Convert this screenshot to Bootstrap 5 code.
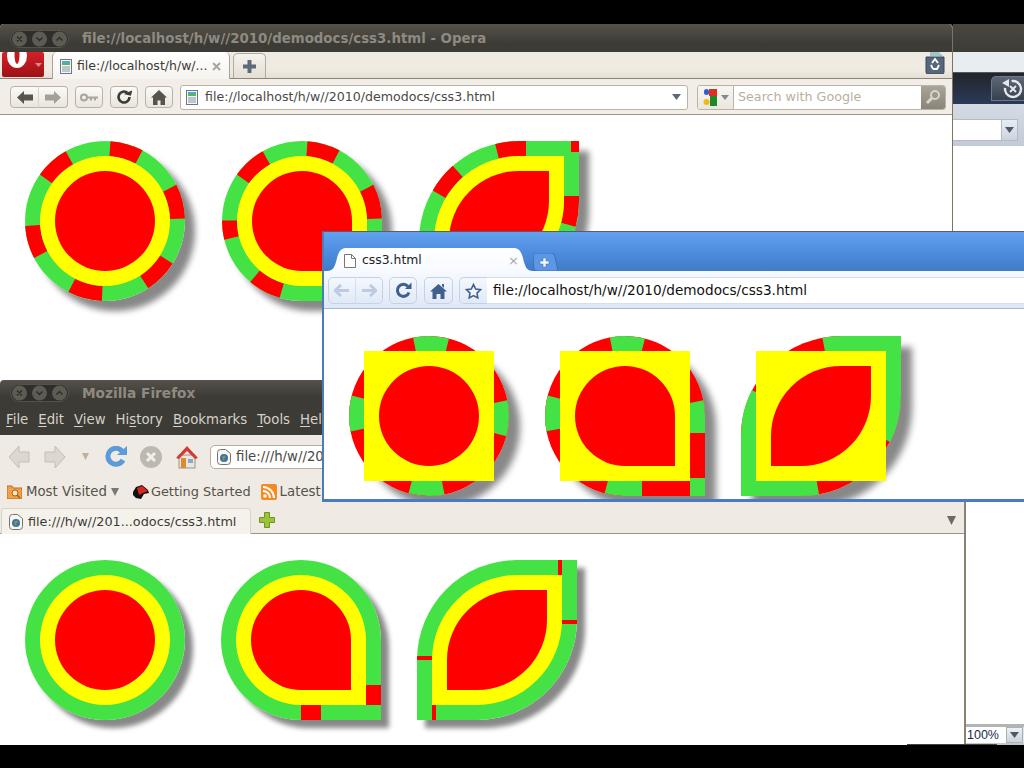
<!DOCTYPE html>
<html lang="en">
<head>
<meta charset="utf-8">
<title>css3 demo desktop</title>
<link href="https://cdn.jsdelivr.net/npm/bootstrap@5.3.0/dist/css/bootstrap.min.css" rel="stylesheet">
<style>
html,body{margin:0;background:#000;overflow:hidden}
body{font-family:"DejaVu Sans",sans-serif}
.desk{position:relative;width:1024px;height:768px;overflow:hidden;background:#000}
.win{position:absolute;overflow:hidden;background:#fff;display:flex;flex-direction:column}
.win svg{flex:none}
.w-back{left:953px;top:24px;width:71px;height:721px;z-index:1}
.w-opera{left:0;top:24px;width:953px;height:400px;z-index:2;border-right:1px solid #7c7464;border-radius:4px 4px 0 0}
.w-fox{left:0;top:380px;width:966px;height:365px;z-index:3;border-right:2px solid #8a8272;border-radius:4px 4px 0 0}
.w-chr{left:322px;top:231px;width:720px;height:271px;z-index:4;border:2px solid #4a7cbd;border-top:1px solid #55606e;border-right:0;border-bottom-width:3px}
.titlebar{height:28px;flex:none;background:linear-gradient(#56524a,#3c3b36 70%);padding:2px 0 0 10px;gap:13px;color:#8f8a80;font-weight:700;font-size:13.35px;white-space:nowrap}
.fox-title{height:24px;padding-top:2px;font-size:13.7px}
.pill{display:block;width:59px;height:18px;flex:none}
.op-tabs{height:27px;flex:none;border-bottom:1px solid #8d8678;background:linear-gradient(#efebe3 70%,#e3dfd6)}
.op-menu{width:42px;height:25px;margin:0 8px 0 2px;flex:none;align-self:flex-start}
.op-tab{width:178px;height:27px;flex:none;align-self:flex-start;background:linear-gradient(#fff,#f6f4ef);border:1px solid #a9a395;border-bottom:0;border-top:0;border-top-right-radius:5px;border-top-left-radius:5px;font-size:12.5px;color:#3c3b37;padding:2px 0 0 7px;gap:5px;margin-right:3px;white-space:nowrap}
.op-new{width:33px;height:25px;flex:none;align-self:flex-end;background:linear-gradient(#f6f3ed,#e4dfd5);border:1px solid #b1ab9e;border-bottom:0;border-radius:5px 5px 0 0}
.op-trash{margin-left:auto;margin-right:7px;flex:none}
.op-bar{height:36px;flex:none;border-bottom:1px solid #9c9689;background:#f2eee7;padding:1px 0 0 10px;color:#3c3b37}
.tb{height:22px;padding:0;display:flex;align-items:center;justify-content:center;border:1px solid #b9b3a7;border-radius:4px;background:linear-gradient(#fbfaf7,#e9e5dc);flex:none}
.tb:disabled{opacity:1}
.tb-h{width:28px}
.tb-g{width:29px;border-radius:4px 0 0 4px}
.tb-g2{width:30px;border-radius:0 4px 4px 0;border-left:1px solid #d8d3c9;margin-left:-1px}
.gp7{margin-right:7px}
.urlbox{height:25px;background:#fff;border:1px solid #b9b3a7;border-radius:3px;font-size:12.6px;color:#4a4945;white-space:nowrap;overflow:hidden}
.op-url{width:508px;margin:0 9px 0 0;padding:0 6px 0 5px;gap:7px}
.op-search{width:249px;color:#b9af9d;font-size:12.7px}
.g-box{width:36px;height:100%;border-right:1px solid #b9b3a7;background:linear-gradient(#f8f6f1,#ebe7de);padding-left:4px;gap:3px;flex:none}
.op-go{width:24px;height:100%;background:linear-gradient(#aaa498,#8a8578);flex:none;margin-left:auto}
.sheet{flex:1;background:#fff}
.op-sheet{padding:26px 0 0 25px;gap:37px}
.fox-sheet{padding:26px 0 0 25px;gap:36px}
.chr-sheet{padding:27px 0 0 25px;gap:36px}
.shp{width:160px;height:160px;flex:none;position:relative}
.shp svg{display:block;overflow:visible;width:160px;height:160px}
.sh-o{box-shadow:10px 10px 6px #888}
.sh-f{box-shadow:8px 8px 5px #888}
.sh-c{box-shadow:11px 11px 7px #888}
.r-c{border-radius:50%}
.r-d{border-radius:80px 80px 0 80px}
.r-l{border-radius:100px 0 100px 0}
.fox-menu{height:31px;flex:none;background:#3c3b36;padding-left:6px;font-size:13.3px;color:#d5d1c8;gap:10px;white-space:nowrap}
.fox-menu u{text-decoration-thickness:1px;text-underline-offset:2px}
.fox-bar{height:43px;flex:none;padding-left:8px;background:#efebe4}
.fwd{margin:0 16px 0 14px}
.tri{margin-right:16px}
.rel{margin-right:13px}
.stp{margin-right:14px}
.fox-url{width:500px;height:24px;margin-left:12px;padding-left:6px;gap:5px;font-size:13.3px;border-radius:5px;flex:none;border-color:#b8ae98}
.fox-marks{height:29px;flex:none;background:#efebe4;padding:0 0 2px 7px;font-size:13.3px;color:#555249;white-space:nowrap}
.gs{font-size:12.9px;margin-left:2px}
.vis{margin-right:14px}
.rss{margin-left:10px}
.lat{margin-left:3px}
.fox-tabs{height:27px;flex:none;background:#efebe4;border-bottom:1px solid #9b9589;padding-left:1px}
.fox-tab{width:250px;height:26px;flex:none;align-self:flex-start;margin-top:1px;background:#f5f2ec;border:1px solid #d9d4c8;border-bottom:0;border-radius:3px 3px 0 0;padding-left:7px;gap:5px;font-size:12.8px;color:#3c3b37;white-space:nowrap}
.chr-top{height:39px;flex:none;background:linear-gradient(#62a0f0,#4b8ada 60%,#3f7cc9);padding-left:3px}
.chr-tab{width:206px;height:23px;flex:none;background:linear-gradient(#fff,#f7faff);clip-path:path('M0,23 C6,23 8,19 10,10 C12,3 14,0 20,0 L186,0 C192,0 194,3 196,10 C198,19 200,23 206,23 Z');padding:2px 0 0 17px;gap:6px;font-size:12.4px;color:#222;white-space:nowrap}
.chr-x{margin-left:auto;margin-right:14px;color:#a9a9a9;font-size:13px}
.chr-bar{height:38px;flex:none;background:linear-gradient(#f7faff,#dfe8f6);border-bottom:1px solid #a6b9d6;padding:2px 0 0 4px}
.cb{height:27px;padding:0;display:flex;align-items:center;justify-content:center;border:1px solid #c5d2e6;border-radius:5px;background:linear-gradient(#f4f8fe,#e0e9f6);flex:none}
.cb:disabled{opacity:1}
.cb-h{width:28px;margin-right:7px}
.cb-h2{width:29px;margin-right:6px}
.cb-g{width:28px;border-radius:5px 0 0 5px}
.cb-g2{width:28px;margin:0 6px 0 -1px;border-radius:0 5px 5px 0;border-left:1px solid #d3ddec}
.omni{height:27px;flex:1;font-size:13.65px;color:#111;white-space:nowrap}
.omni-star{width:28px;height:27px;flex:none;border:1px solid #c5d2e6;border-right:0;border-radius:5px 0 0 5px;background:linear-gradient(#f4f8fe,#e0e9f6)}
.omni-text{background:#fff;flex:1;height:27px;padding-left:6px;border-top:1px solid #d4deee;border-bottom:1px solid #d4deee}
.bk-title{height:28px;flex:none;background:linear-gradient(#4a4740,#3c3b36)}
.bk-light{height:21px;flex:none;background:#e8edf1;border-bottom:1px solid #55595f}
.bk-dark{height:31px;flex:none;background:linear-gradient(#22252a,#2b3a58);padding:3px 0 3px 38px}
.bk-btn{flex:1;height:25px;background:linear-gradient(#5d6875,#36404e);border:1px solid #6f7a87;border-right:0;border-radius:5px 0 0 0;padding-left:8px}
.bk-field{height:42px;flex:none;background:linear-gradient(#d4dbe4,#c2cbd7);padding:15px 6px 5px 0}
.bk-input{height:22px;background:#fff;border:1px solid #b5bcc6;border-left:0}
.bk-arrow{width:16px;margin-left:auto;height:100%;background:linear-gradient(#e9edf2,#cdd4de);border-left:1px solid #b5bcc6}
.bk-foot{height:21px;flex:none;margin-top:auto;border-top:3px solid #b4b4b4;background:#e4e7ea;font-family:"Liberation Sans",sans-serif;font-size:12.5px;color:#16284e;border-bottom:2px solid #c4c8cc}
.bk-num{width:40px;height:100%;background:#fff;padding-left:1px;margin-left:13px;flex:none}
.bk-pad{width:17px;height:100%;border:1px solid #aab1bb;background:linear-gradient(#eef1f4,#ccd3dc);flex:none}
.foot-line{position:absolute;left:907px;top:744px;width:90px;height:1px;background:#444;z-index:5}
</style>
</head>
<body>
<svg class="d-none" xmlns="http://www.w3.org/2000/svg">
  <symbol id="wm" viewBox="0 0 59 18">
    <rect x=".5" y=".5" width="58" height="17" rx="8.5" fill="#2f2e2a" stroke="#55524b"/>
    <circle cx="9.5" cy="9" r="7.5" fill="#5e5b55"/><circle cx="29.5" cy="9" r="7.5" fill="#5e5b55"/><circle cx="49.5" cy="9" r="7.5" fill="#5e5b55"/>
    <path d="M7 6.500l5 5M12 6.500l-5 5M26.500 7.500l3 3 3-3M46.500 10.500l3-3 3 3" fill="none" stroke="#2f2e2a" stroke-width="1.500"/>
  </symbol>
  <symbol id="doc" viewBox="0 0 12 15">
    <rect x=".5" y=".5" width="11" height="14" fill="#f4f6f8" stroke="#6d7884"/>
    <rect x="2" y="2" width="8" height="4" fill="#4fa9d8"/><rect x="2" y="4" width="8" height="2" fill="#5db84a"/>
    <path d="M2 8h8M2 10h8M2 12h8" stroke="#8794a2"/>
  </symbol>
  <symbol id="globe" viewBox="0 0 14 16">
    <path d="M.5 3.500a3 3 0 0 1 3-3h5l5 4v8a3 3 0 0 1-3 3h-7a3 3 0 0 1-3-3z" fill="#f6f6f4" stroke="#77736a"/>
    <circle cx="7" cy="9" r="4" fill="#3f6fa8"/><path d="M5 7.500l3-1 1 2-2 1 1 2-2 0z" fill="#7a9a44"/>
  </symbol>
  <symbol id="gray-arrow" viewBox="0 0 22 24">
    <path d="M1 12L11 1v6h10v10H11v6z" fill="#dcd8d0" stroke="#c2beb5"/>
  </symbol>
</svg>

<main class="desk">

  <section class="win w-back">
    <div class="bk-title"></div>
    <div class="bk-light"></div>
    <div class="bk-dark d-flex">
      <div class="bk-btn d-flex align-items-center">
        <svg width="26" height="24" viewBox="0 0 26 24"><circle cx="13" cy="12" r="8" fill="none" stroke="#e3e6ea" stroke-width="2.400" stroke-dasharray="40 12" transform="rotate(-100 13 12)"/><path d="M2 6l7-4v8z" fill="#e3e6ea"/><path d="M10 9l6 6M16 9l-6 6" stroke="#e3e6ea" stroke-width="2"/></svg>
      </div>
    </div>
    <div class="bk-field">
      <div class="bk-input d-flex"><span class="bk-arrow d-flex align-items-center justify-content-center"><svg width="9" height="6" viewBox="0 0 9 6"><path d="M0 0h9L4.500 6z" fill="#4e5a68"/></svg></span></div>
    </div>
    <div class="bk-foot d-flex align-items-center">
      <span class="bk-num d-flex align-items-center">100%</span>
      <span class="bk-pad d-flex align-items-center justify-content-center"><svg width="9" height="6" viewBox="0 0 9 6"><path d="M0 0h9L4.500 6z" fill="#4e5a68"/></svg></span>
    </div>
  </section>

  <section class="win w-opera">
    <header class="titlebar d-flex align-items-center"><svg class="pill"><use href="#wm"/></svg><span>file://localhost/h/w//2010/demodocs/css3.html - Opera</span></header>
    <div class="op-tabs d-flex align-items-end">
      <svg class="op-menu" viewBox="0 0 42 25"><defs><linearGradient id="rd" x1="0" y1="0" x2="0" y2="1"><stop offset="0" stop-color="#d62027"/><stop offset="1" stop-color="#9c1116"/></linearGradient><clipPath id="rc"><rect width="42" height="25" rx="2"/></clipPath></defs><g clip-path="url(#rc)"><rect width="42" height="25" fill="url(#rd)"/><ellipse cx="15" cy="4" rx="10" ry="12" fill="#fff"/><ellipse cx="15" cy="3" rx="2.500" ry="9" fill="#c8181e"/><path d="M33 11h7l-3.500 4z" fill="#d98a8a"/></g></svg>
      <div class="op-tab d-flex align-items-center">
        <svg width="12" height="15"><use href="#doc"/></svg><span>file://localhost/h/w/...</span><svg class="ms-auto me-2" width="9" height="9" viewBox="0 0 9 9"><path d="M1 1l7 7M8 1l-7 7" stroke="#a9a69f" stroke-width="2"/></svg>
      </div>
      <div class="op-new d-flex align-items-center justify-content-center"><svg width="13" height="13" viewBox="0 0 13 13"><path d="M4.500 0h4v4.500H13v4H8.500V13h-4V8.500H0v-4h4.500z" fill="#5e6a78"/></svg></div>
      <svg class="op-trash mb-1" width="20" height="22" viewBox="0 0 20 22"><path d="M5 0h9l4 4H5z" fill="#9fc5c8"/><path d="M1 5h18v15a2 2 0 0 1-2 2H3a2 2 0 0 1-2-2z" fill="#56677c" stroke="#3a4656"/><path d="M7 11l3-4 3 4M14 13l-2 4h-4M6 13l2 4" fill="none" stroke="#fff" stroke-width="1.800"/></svg>
    </div>
    <div class="op-bar d-flex align-items-center">
      <button class="btn tb tb-g" type="button" aria-label="Back"><svg width="16" height="13" viewBox="0 0 16 13"><path d="M0 6.500L7 0v3.500h9v6H7V13z" fill="#57544d"/></svg></button>
      <button class="btn tb tb-g2 gp7" type="button" aria-label="Forward"><svg width="16" height="13" viewBox="0 0 16 13"><path d="M16 6.500L9 0v3.500H0v6h9V13z" fill="#a3a097"/></svg></button>
      <button class="btn tb tb-h gp7" type="button" aria-label="Key"><svg width="18" height="9" viewBox="0 0 18 9"><circle cx="4" cy="4.500" r="3" fill="none" stroke="#a8a59c" stroke-width="2"/><path d="M7 3.500h11v2h-2v2h-2v-2h-2v2h-2v-2H7z" fill="#a8a59c"/></svg></button>
      <button class="btn tb tb-h gp7" type="button" aria-label="Reload"><svg width="16" height="16" viewBox="0 0 16 16"><path d="M13.500 8a5.500 5.500 0 1 1-2-4.200" fill="none" stroke="#3b3a36" stroke-width="2.600"/><path d="M8 6h7.500V.5z" fill="#3b3a36" transform="rotate(14 12 4)"/></svg></button>
      <button class="btn tb tb-h gp7" type="button" aria-label="Home"><svg width="16" height="15" viewBox="0 0 16 15"><path d="M8 0l8 7.500h-2V15H9.500v-4.500h-3V15H2V7.500H0z" fill="#57544d"/></svg></button>
      <div class="urlbox op-url d-flex align-items-center"><svg width="12" height="15"><use href="#doc"/></svg><span>file://localhost/h/w//2010/demodocs/css3.html</span><svg class="ms-auto" width="9" height="6" viewBox="0 0 9 6"><path d="M0 0h9L4.500 6z" fill="#5e6a78"/></svg></div>
      <div class="urlbox op-search d-flex align-items-center">
        <div class="g-box d-flex align-items-center"><svg width="16" height="17" viewBox="0 0 16 17"><rect x="2" y="0" width="5" height="6" rx="2.500" fill="#2a62d0"/><rect x="7" y="0" width="8" height="7" fill="#dd3024"/><circle cx="4.500" cy="13" r="3" fill="#f3b617"/><path d="M8 7h7v10H8z" fill="#1c8a28"/></svg><svg width="8" height="5" viewBox="0 0 8 5"><path d="M0 0h8L4 5z" fill="#7e8a98"/></svg></div>
        <span class="ms-1">Search with Google</span>
        <div class="op-go d-flex align-items-center justify-content-center"><svg width="16" height="16" viewBox="0 0 16 16"><circle cx="10" cy="6" r="4" fill="none" stroke="#d8d4cb" stroke-width="2"/><path d="M7 9l-5 5" stroke="#d8d4cb" stroke-width="3"/></svg></div>
      </div>
    </div>
    <div class="sheet d-flex op-sheet">
      <div class="shp sh-o r-c"><svg viewBox="0 0 160 160">
        <circle cx="80" cy="80" r="80" fill="#44e244"/>
        <circle cx="80" cy="80" r="72.500" fill="none" stroke="#f00" stroke-width="15" stroke-dasharray="0 5.06 30.37 44.29 31.63 43.02 31.63 44.29 31.63 44.29 30.37 49.35 31.63 37.96" transform="rotate(-90 80 80)"/>
        <circle cx="80" cy="80" r="65" fill="#ff0"/><circle cx="80" cy="80" r="50" fill="#f00"/></svg></div>
      <div class="shp sh-o r-d"><svg viewBox="0 0 160 160">
        <path d="M80 0a80 80 0 0 1 80 80v80H80A80 80 0 0 1 80 0z" fill="#44e244"/>
        <circle cx="80" cy="80" r="72.500" fill="none" stroke="#f00" stroke-width="15" stroke-dasharray="0 5.06 30.37 44.29 31.63 136.66 30.37 45.55 17.72 44.29 31.63 37.96" transform="rotate(-90 80 80)"/>
        <path d="M80 15a65 65 0 0 1 65 65v65H80A65 65 0 0 1 80 15z" fill="#ff0"/>
        <path d="M80 30a50 50 0 0 1 50 50v50H80A50 50 0 0 1 80 30z" fill="#f00"/></svg></div>
      <div class="shp sh-o r-l"><svg viewBox="0 0 160 160">
        <path d="M100 0h60v60A100 100 0 0 1 60 160H0V100A100 100 0 0 1 100 0z" fill="#44e244"/>
        <path d="M20.200 53.200A92.500 92.500 0 0 1 38.700 30.400M78 10.200A92.500 92.500 0 0 1 100 7.500H107M152.500 55V60A92.500 92.500 0 0 1 149.400 83.700" fill="none" stroke="#f00" stroke-width="15"/>
        <path d="M152 0h8v11h-8z" fill="#f00"/>
        <path d="M100 15h45v45A85 85 0 0 1 60 145H15V100A85 85 0 0 1 100 15z" fill="#ff0"/>
        <path d="M100 30h30v30A70 70 0 0 1 60 130H30V100A70 70 0 0 1 100 30z" fill="#f00"/></svg></div>
    </div>
  </section>

  <section class="win w-fox">
    <header class="titlebar fox-title d-flex align-items-center"><svg class="pill"><use href="#wm"/></svg><span>Mozilla Firefox</span></header>
    <nav class="fox-menu d-flex align-items-center"><span><u>F</u>ile</span><span><u>E</u>dit</span><span><u>V</u>iew</span><span>Hi<u>s</u>tory</span><span><u>B</u>ookmarks</span><span><u>T</u>ools</span><span><u>H</u>elp</span></nav>
    <div class="fox-bar d-flex align-items-center">
      <svg width="22" height="24"><use href="#gray-arrow"/></svg>
      <svg class="fwd" width="22" height="24" transform="scale(-1 1)"><use href="#gray-arrow"/></svg>
      <svg class="tri" width="7" height="7" viewBox="0 0 7 7"><path d="M0 0h7L3.500 7z" fill="#c2b09a"/></svg>
      <svg class="rel" width="22" height="22" viewBox="0 0 22 22"><path d="M18 14a8 8 0 1 1-1-9" fill="none" stroke="#5b9bd8" stroke-width="5"/><path d="M12 9h10V0z" fill="#5b9bd8"/></svg>
      <svg class="stp" width="22" height="22" viewBox="0 0 22 22"><circle cx="11" cy="11" r="11" fill="#bdb9b1"/><path d="M7 7l8 8M15 7l-8 8" stroke="#f2efe9" stroke-width="3"/></svg>
      <svg width="22" height="24" viewBox="0 0 22 24"><rect x="3" y="10" width="16" height="13" fill="#e9e6de" stroke="#9a958a"/><path d="M0 13L11 1l11 12-3 1-8-8-8 8z" fill="#d43a33"/><rect x="5" y="13" width="5" height="10" fill="#e08a2c"/><rect x="12" y="14" width="5" height="4" fill="#8aa8c8"/></svg>
      <div class="urlbox fox-url d-flex align-items-center"><svg width="14" height="16"><use href="#globe"/></svg><span>file:///h/w//2010/demodocs/css3.html</span></div>
    </div>
    <div class="fox-marks d-flex align-items-center">
      <svg width="15" height="15" viewBox="0 0 15 15"><path d="M0 2h5l1 2h9v11H0z" fill="#f0a24a" stroke="#b86a18"/><circle cx="8" cy="9" r="3" fill="#fbe4c4" stroke="#a8601a"/><path d="M10 11l3 3" stroke="#a8601a" stroke-width="1.500"/></svg>
      <span class="ms-1">Most Visited</span><svg class="ms-1 vis" width="8" height="8" viewBox="0 0 8 8"><path d="M0 0h8L4 8z" fill="#777"/></svg>
      <svg width="16" height="14" viewBox="0 0 16 14"><path d="M0 7l3-5 6-2 6 5 1 3-5 1-3 5-5-1-3-3z" fill="#111"/><path d="M4 3l5-2 6 5-5 2-4 2z" fill="#d6281f"/></svg>
      <span class="gs">Getting Started</span>
      <svg class="rss" width="16" height="16" viewBox="0 0 16 16"><rect width="16" height="16" rx="2" fill="#f58a1f"/><circle cx="4" cy="12" r="1.800" fill="#fff"/><path d="M2 7a7 7 0 0 1 7 7M2 3a11 11 0 0 1 11 11" fill="none" stroke="#fff" stroke-width="2"/></svg>
      <span class="lat">Latest Headlines</span>
    </div>
    <div class="fox-tabs d-flex align-items-center">
      <div class="fox-tab d-flex align-items-center"><svg width="14" height="16"><use href="#globe"/></svg><span>file:///h/w//201...odocs/css3.html</span></div>
      <svg class="ms-2" width="16" height="16" viewBox="0 0 16 16"><path d="M5.500 .5h5v5h5v5h-5v5h-5v-5h-5v-5h5z" fill="#9cc23c" stroke="#6f9420"/></svg>
      <svg class="ms-auto me-2" width="9" height="9" viewBox="0 0 9 9"><path d="M0 0h9L4.500 9z" fill="#6d6a62"/></svg>
    </div>
    <div class="sheet d-flex fox-sheet">
      <div class="shp sh-f r-c"><svg viewBox="0 0 160 160"><circle cx="80" cy="80" r="80" fill="#44e244"/><circle cx="80" cy="80" r="65" fill="#ff0"/><circle cx="80" cy="80" r="50" fill="#f00"/></svg></div>
      <div class="shp sh-f r-d"><svg viewBox="0 0 160 160">
        <path d="M80 0a80 80 0 0 1 80 80v80H80A80 80 0 0 1 80 0z" fill="#44e244"/>
        <path d="M145 125h15v20h-15zM80 145h20v15H80z" fill="#f00"/>
        <path d="M80 15a65 65 0 0 1 65 65v65H80A65 65 0 0 1 80 15z" fill="#ff0"/>
        <path d="M80 30a50 50 0 0 1 50 50v50H80A50 50 0 0 1 80 30z" fill="#f00"/></svg></div>
      <div class="shp sh-f r-l"><svg viewBox="0 0 160 160">
        <path d="M100 0h60v60A100 100 0 0 1 60 160H0V100A100 100 0 0 1 100 0z" fill="#44e244"/>
        <path d="M141 0h4v15h-4zM145 60h15v4h-15zM0 96h15v4H0zM15 145h4v15h-4z" fill="#f00"/>
        <path d="M100 15h45v45A85 85 0 0 1 60 145H15V100A85 85 0 0 1 100 15z" fill="#ff0"/>
        <path d="M100 30h30v30A70 70 0 0 1 60 130H30V100A70 70 0 0 1 100 30z" fill="#f00"/></svg></div>
    </div>
  </section>

  <section class="win w-chr">
    <div class="chr-top d-flex align-items-end">
      <div class="chr-tab d-flex align-items-center"><svg width="12" height="14" viewBox="0 0 12 14"><path d="M.5.500h7l4 4v9H.5z" fill="#fff" stroke="#777"/><path d="M7.500.5v4h4" fill="none" stroke="#777"/></svg><span>css3.html</span><span class="chr-x">×</span></div>
      <svg class="mb-0" width="25" height="18" viewBox="0 0 25 18"><path d="M0 0h18c2 0 3 1 4 4l3 14H4C2 18 1 16 .5 12z" fill="#5c97e6" stroke="#3a6fb8"/><path d="M10 5h3v3h3v3h-3v3h-3v-3H7V8h3z" fill="#f2f6fc" stroke="#3a6fb8" stroke-width=".5"/></svg>
    </div>
    <div class="chr-bar d-flex align-items-center">
      <button class="btn cb cb-g" type="button" aria-label="Back"><svg width="16" height="13" viewBox="0 0 16 13"><path d="M1 6.500h14M7 1L1 6.500 7 12" fill="none" stroke="#bccbe2" stroke-width="3"/></svg></button>
      <button class="btn cb cb-g2" type="button" aria-label="Forward"><svg width="16" height="13" viewBox="0 0 16 13"><path d="M15 6.500H1M9 1l6 5.500L9 12" fill="none" stroke="#bccbe2" stroke-width="3"/></svg></button>
      <button class="btn cb cb-h" type="button" aria-label="Reload"><svg width="17" height="17" viewBox="0 0 17 17"><path d="M14 10.500a6 6 0 1 1-1-6" fill="none" stroke="#3f5f8e" stroke-width="3"/><path d="M10 7h6.500V.5z" fill="#3f5f8e"/></svg></button>
      <button class="btn cb cb-h2" type="button" aria-label="Home"><svg width="17" height="16" viewBox="0 0 17 16"><path d="M8.500 1L17 8.500h-2.500V16h-4v-5h-4v5h-4V8.500H0z" fill="#3f5f8e"/><path d="M12 1h2v4l-2-2z" fill="#3f5f8e"/></svg></button>
      <div class="omni d-flex align-items-center">
        <div class="omni-star d-flex align-items-center justify-content-center"><svg width="17" height="16" viewBox="0 0 17 16"><path d="M8.500 1.500l2.200 4.500 4.800.7-3.500 3.400.8 4.800-4.300-2.300-4.300 2.300.8-4.800L1.500 6.700l4.800-.7z" fill="#f1f5fb" stroke="#3f5f8e" stroke-width="1.600"/></svg></div>
        <div class="omni-text d-flex align-items-center">file://localhost/h/w//2010/demodocs/css3.html</div>
      </div>
    </div>
    <div class="sheet d-flex chr-sheet">
      <div class="shp sh-c r-c"><svg viewBox="0 0 160 160">
        <circle cx="80" cy="80" r="80" fill="#f00"/>
        <circle cx="80" cy="80" r="72.500" fill="none" stroke="#44e244" stroke-width="15" stroke-dasharray="32.9 80.98" transform="rotate(-101.5 80 80)"/>
        <rect x="15" y="15" width="130" height="130" fill="#ff0"/><circle cx="80" cy="80" r="50" fill="#f00"/></svg></div>
      <div class="shp sh-c r-d"><svg viewBox="0 0 160 160">
        <path d="M80 0a80 80 0 0 1 80 80v80H80A80 80 0 0 1 80 0z" fill="#f00"/>
        <circle cx="80" cy="80" r="72.500" fill="none" stroke="#44e244" stroke-width="15" stroke-dasharray="18.35 80.99 14.55 113.88 18.35 80.99 32.9 80.99 14.55" transform="rotate(-90 80 80)"/>
        <path d="M145 78h15v19h-15zM78 145h19v15H78zM145 142h15v18h-15z" fill="#44e244"/>
        <rect x="15" y="15" width="130" height="130" fill="#ff0"/>
        <path d="M80 30a50 50 0 0 1 50 50v50H80A50 50 0 0 1 80 30z" fill="#f00"/></svg></div>
      <div class="shp sh-c r-l"><svg viewBox="0 0 160 160">
        <path d="M100 0h60v60A100 100 0 0 1 60 160H0V100A100 100 0 0 1 100 0z" fill="#f00"/>
        <path d="M82.800 9.100A92.500 92.500 0 0 1 100 7.500H152.500V60A92.500 92.500 0 0 1 142.500 102.600M76.700 151A92.500 92.500 0 0 1 60 152.500H7.500V100A92.500 92.500 0 0 1 17.500 57.400" fill="none" stroke="#44e244" stroke-width="15"/>
        <rect x="15" y="15" width="130" height="130" fill="#ff0"/>
        <path d="M100 30h30v30A70 70 0 0 1 60 130H30V100A70 70 0 0 1 100 30z" fill="#f00"/></svg></div>
    </div>
  </section>

  <div class="foot-line"></div>
</main>
<script src="https://cdn.jsdelivr.net/npm/bootstrap@5.3.0/dist/js/bootstrap.bundle.min.js"></script>
</body>
</html>
